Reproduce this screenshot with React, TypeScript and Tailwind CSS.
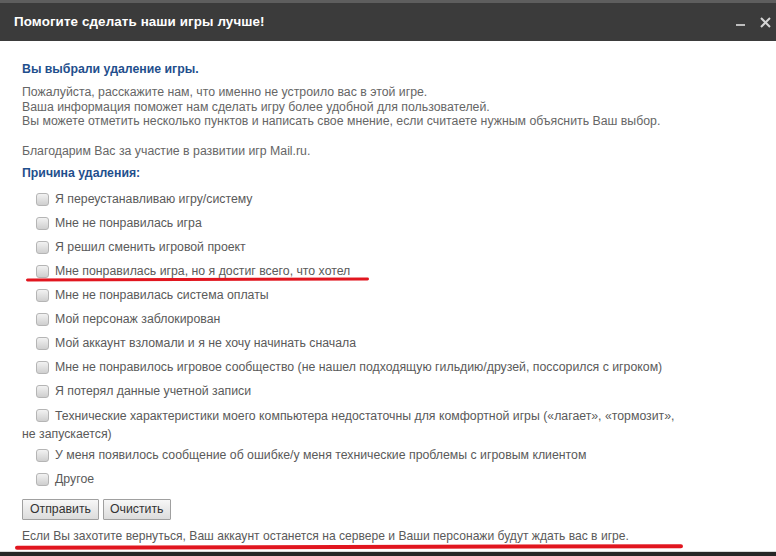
import React from "react";

const items: string[] = [
  "Я переустанавливаю игру/систему",
  "Мне не понравилась игра",
  "Я решил сменить игровой проект",
  "Мне понравилась игра, но я достиг всего, что хотел",
  "Мне не понравилась система оплаты",
  "Мой персонаж заблокирован",
  "Мой аккаунт взломали и я не хочу начинать сначала",
  "Мне не понравилось игровое сообщество (не нашел подходящую гильдию/друзей, поссорился с игроком)",
  "Я потерял данные учетной записи",
];

function Box() {
  return (
    <span className="inline-block w-[13px] h-[13px] rounded-[3px] border border-[#b5b5b5] bg-gradient-to-b from-[#f2f2f2] to-[#cfcfcf] align-[-2px] mr-[6px] shrink-0" />
  );
}

export default function App() {
  return (
    <div
      className="relative w-[776px] h-[556px] overflow-hidden bg-white flex flex-col"
      style={{ fontFamily: '"Liberation Sans", Arial, sans-serif' }}
    >
      <div className="h-[3px] bg-[#5e5e5e]" />
      <div className="h-[38px] bg-[#3b3b3b] flex items-center justify-between pl-[14px] pr-[5px]">
        <span className="text-white font-bold text-[13.4px] tracking-[0.1px]">Помогите сделать наши игры лучше!</span>
        <div className="flex items-center gap-[14px]">
          <svg width="10" height="10" viewBox="0 0 10 10" className="mt-[6px]">
            <rect x="0" y="4" width="9" height="2" fill="#bdbdbd" />
          </svg>
          <svg width="11" height="11" viewBox="0 0 11 11">
            <path d="M1 1 L10 10 M10 1 L1 10" stroke="#d4d4d4" strokeWidth="2" />
          </svg>
        </div>
      </div>

      <div className="flex-1 pl-[22px] pt-[21px] text-[12.3px] leading-[15px] text-[#666]">
        <div className="font-bold text-[#1f4f8d]">Вы выбрали удаление игры.</div>
        <div className="mt-[8px] leading-[14.5px]">
          <div>Пожалуйста, расскажите нам, что именно не устроило вас в этой игре.</div>
          <div>Ваша информация поможет нам сделать игру более удобной для пользователей.</div>
          <div>Вы можете отметить несколько пунктов и написать свое мнение, если считаете нужным объяснить Ваш выбор.</div>
        </div>
        <div className="mt-[15px]">Благодарим Вас за участие в развитии игр Mail.ru.</div>
        <div className="mt-[7px] font-bold text-[#1f4f8d]">Причина удаления:</div>

        <div className="mt-[7px] text-[12.3px] text-[#5a5a5a] w-[668px]">
          {items.map((t) => (
            <div key={t} className="h-[24px] flex items-center pl-[14px]">
              <Box />
              <span>{t}</span>
            </div>
          ))}
          <div className="leading-[18px] pt-[3px] pb-[1px]">
            <span className="inline-block w-[14px]" />
            <Box />
            Технические характеристики моего компьютера недостаточны для комфортной игры («лагает», «тормозит», не запускается)
          </div>
          <div className="h-[24px] flex items-center pl-[14px]">
            <Box />
            <span>У меня появилось сообщение об ошибке/у меня технические проблемы с игровым клиентом</span>
          </div>
          <div className="h-[24px] flex items-center pl-[14px]">
            <Box />
            <span>Другое</span>
          </div>
        </div>

        <div className="mt-[7px] flex gap-[4px]">
          <button className="h-[21px] px-[7px] border border-[#a0a0a0] rounded-[1px] bg-gradient-to-b from-[#f7f7f7] to-[#dcdcdc] text-[12.3px] text-[#333] leading-[19px]">
            Отправить
          </button>
          <button className="h-[21px] px-[6px] border border-[#a0a0a0] rounded-[1px] bg-gradient-to-b from-[#f7f7f7] to-[#dcdcdc] text-[12.3px] text-[#333] leading-[19px]">
            Очистить
          </button>
        </div>
        <div className="mt-[8px] text-[12.1px] text-[#5a5a5a] leading-[16px]">
          Если Вы захотите вернуться, Ваш аккаунт останется на сервере и Ваши персонажи будут ждать вас в игре.
        </div>
      </div>

      <div className="h-[1px] bg-[#d8d8d8]" />
      <div className="h-[4px] bg-[#262626]" />

      <div className="absolute left-[26px] top-[278px] w-[343px] h-[3px] rounded-full bg-[#e1161f] -rotate-[0.2deg]" />
      <div className="absolute left-[15px] top-[545px] w-[668px] h-[4px] rounded-full bg-[#e1161f] -rotate-[0.15deg]" />
    </div>
  );
}
